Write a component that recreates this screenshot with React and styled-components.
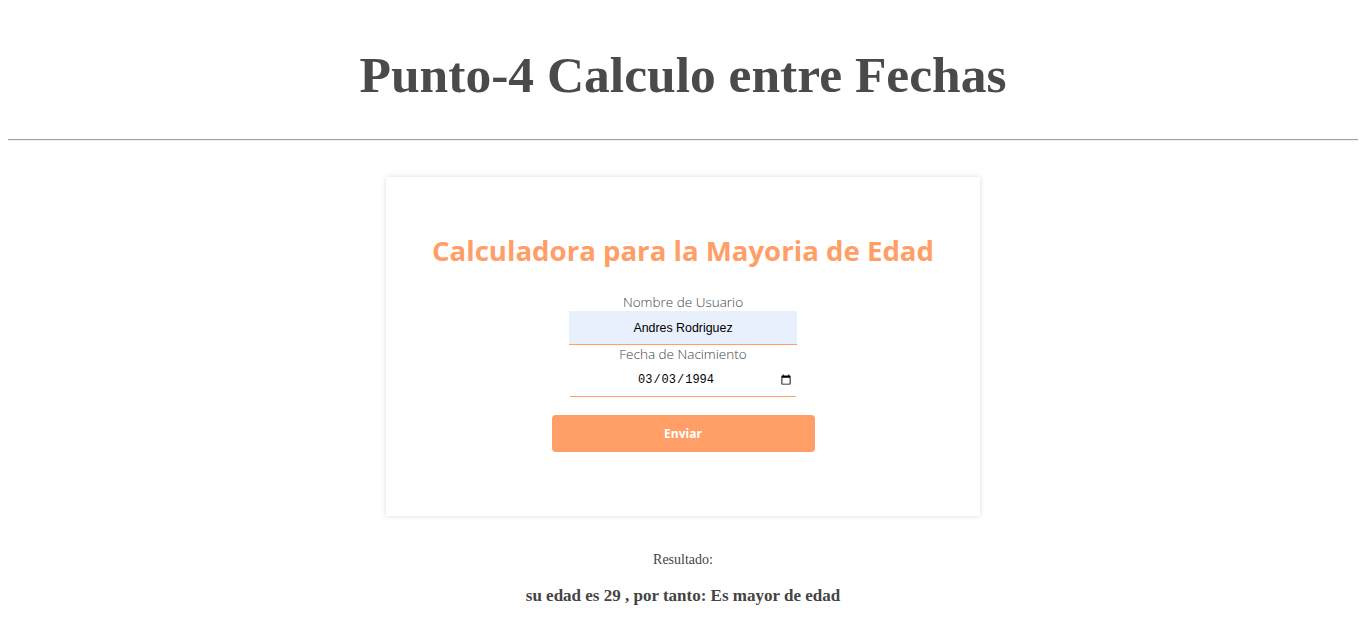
import styled, { createGlobalStyle } from 'styled-components';

const GlobalStyle = createGlobalStyle`
  body {
    margin: 8px;
    background: #ffffff;
    font-family: "Liberation Serif", "Times New Roman", serif;
    color: #444;
  }
`;

const Title = styled.h1`
  font-family: "Liberation Serif", "Times New Roman", serif;
  font-size: 51.5px;
  font-weight: bold;
  color: #4a4a4a;
  text-align: center;
  margin: 39px 0 36px;
  line-height: 56px;
`;

const Divider = styled.hr`
  border: none;
  border-top: 1px solid #a0a0a0;
  border-bottom: 1px solid #eeeeee;
  margin: 0 0 36px;
`;

const Card = styled.form`
  width: 594px;
  height: 339px;
  box-sizing: border-box;
  margin: 0 auto;
  background: #fff;
  box-shadow: 0 0 5px rgba(0, 0, 0, 0.15);
  display: flex;
  flex-direction: column;
  align-items: center;
  padding-top: 54px;
  font-family: "Open Sans", "Noto Sans", sans-serif;
`;

const CardTitle = styled.h2`
  margin: 0 0 24px;
  font-size: 27.6px;
  line-height: 38px;
  font-weight: 700;
  color: #ff9e66;
`;

const Field = styled.div`
  display: flex;
  flex-direction: column;
  align-items: center;
`;

const Label = styled.label`
  font-size: 13.5px;
  font-weight: 300;
  color: #444;
  line-height: 18px;
`;

const Input = styled.input`
  width: 228px;
  height: 34px;
  box-sizing: border-box;
  border: 0 solid #ff9e66;
  border-bottom-width: 1px;
  border-bottom-color: #ff9e66;
  background-color: #e8f0fe;
  text-align: center;
  font-family: "Liberation Sans", Arial, sans-serif;
  font-size: 12.4px;
  color: #000;
  outline: none;
  padding: 0 8px;
`;

const DateInput = styled(Input)`
  width: 226px;
  padding: 0 2px 0 4px;
  background-color: transparent;
  font-family: "Liberation Mono", "Courier New", monospace;
  font-size: 12px;
`;

const Button = styled.button`
  margin-top: 18px;
  width: 263px;
  height: 37px;
  border: none;
  border-radius: 4px;
  background: #ff9e66;
  color: #fff;
  font-family: "Open Sans", "Noto Sans", sans-serif;
  font-weight: 700;
  font-size: 12px;
  cursor: pointer;
`;

const Result = styled.div`
  text-align: center;
  margin-top: 36px;
`;

const ResultLabel = styled.p`
  margin: 0 0 18px;
  font-size: 14px;
  color: #444;
`;

const ResultText = styled.p`
  margin: 0;
  font-size: 17px;
  font-weight: bold;
  color: #444;
`;

export default function App() {
  return (
    <>
      <GlobalStyle />
      <Title>Punto-4 Calculo entre Fechas</Title>
      <Divider />
      <Card onSubmit={e => e.preventDefault()}>
        <CardTitle>Calculadora para la Mayoria de Edad</CardTitle>
        <Field>
          <Label>Nombre de Usuario</Label>
          <Input type="text" defaultValue="Andres Rodriguez" />
        </Field>
        <Field>
          <Label>Fecha de Nacimiento</Label>
          <DateInput type="date" defaultValue="1994-03-03" />
        </Field>
        <Button type="submit">Enviar</Button>
      </Card>
      <Result>
        <ResultLabel>Resultado:</ResultLabel>
        <ResultText>su edad es 29 , por tanto: Es mayor de edad</ResultText>
      </Result>
    </>
  );
}
